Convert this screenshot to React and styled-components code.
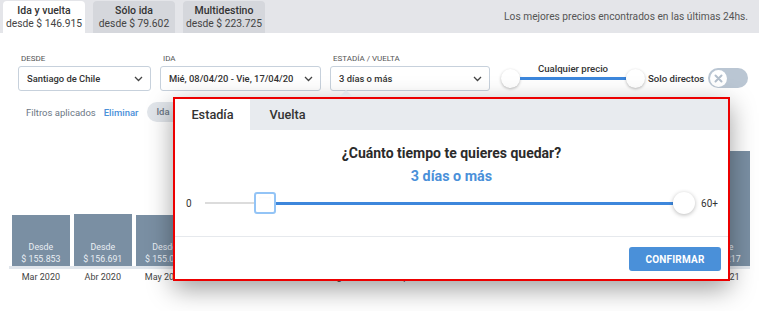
import React from "react";
import styled, { createGlobalStyle } from "styled-components";

const Global = createGlobalStyle`
  body {
    margin: 0;
    background: #fff;
    font-family: Roboto, "Liberation Sans", sans-serif;
    color: #333;
  }
`;

const Page = styled.div`
  position: relative;
  width: 759px;
  height: 311px;
  overflow: hidden;
  background: #fff;
  white-space: nowrap;
`;

const TopBar = styled.div`
  display: flex;
  align-items: flex-end;
  height: 33px;
  padding-left: 3px;
  background: #e4e5e9;
  gap: 8px;
`;

const TripTab = styled.div`
  width: 82px;
  height: 32px;
  display: flex;
  flex-direction: column;
  align-items: center;
  justify-content: center;
  border-radius: 4px 4px 0 0;
  background: ${(p) => (p.$active ? "#fff" : "#d5d7dc")};
  b {
    font-size: 10.5px;
    font-weight: 500;
    line-height: 13px;
    color: #333;
  }
  span {
    font-size: 10.3px;
    line-height: 13px;
    color: #444;
  }
`;

const TopNote = styled.div`
  margin-left: auto;
  align-self: center;
  padding-right: 11px;
  font-size: 10.2px;
  color: #555;
`;

const FilterRow = styled.div`
  display: flex;
  align-items: flex-end;
  gap: 9px;
  margin-top: 20px;
  padding-left: 18px;
`;

const Field = styled.div`
  display: flex;
  flex-direction: column;
  gap: 1px;
`;

const FieldLabel = styled.div`
  font-size: 8px;
  line-height: 12px;
  color: #555;
  text-transform: uppercase;
  padding-left: 3px;
`;

const Select = styled.div`
  width: ${(p) => p.$w}px;
  height: 25px;
  box-sizing: border-box;
  display: flex;
  align-items: center;
  justify-content: space-between;
  padding: 0 7px 0 8px;
  border: 1px solid #c7d1dc;
  border-radius: 3px;
  background: #fff;
  font-size: 9.4px;
  font-weight: 500;
  color: #333;
`;

const PriceGroup = styled.div`
  display: flex;
  flex-direction: column;
  align-items: center;
  margin: 0 0 2px 2px;
`;

const PriceLabel = styled.div`
  font-size: 9.6px;
  font-weight: 500;
  line-height: 13px;
  margin-bottom: -8px;
  color: #333;
`;

const PriceTrack = styled.div`
  display: flex;
  align-items: center;
  height: 22px;
`;

const Knob = styled.div`
  width: 19px;
  height: 19px;
  border-radius: 50%;
  background: #fff;
  box-shadow: 0 1px 3px rgba(0, 0, 0, 0.28);
`;

const BlueLine = styled.div`
  width: ${(p) => (p.$w ? `${p.$w}px` : "auto")};
  flex: ${(p) => (p.$w ? "none" : 1)};
  height: 3px;
  background: #3d87dc;
`;

const Direct = styled.div`
  display: flex;
  align-items: center;
  gap: 4px;
  margin: 0 0 3px -6px;
  font-size: 9.6px;
  font-weight: 500;
  color: #333;
`;

const Toggle = styled.div`
  width: 40px;
  height: 20px;
  border-radius: 10px;
  background: #bac6d3;
  display: flex;
  align-items: center;
  padding-left: 2px;
  box-sizing: border-box;
`;

const ToggleKnob = styled.div`
  width: 17px;
  height: 17px;
  border-radius: 50%;
  background: #fff;
  display: flex;
  align-items: center;
  justify-content: center;
`;

const AppliedRow = styled.div`
  display: flex;
  align-items: center;
  gap: 8px;
  margin-top: 11px;
  padding-left: 26px;
  height: 20px;
  font-size: 9.5px;
  color: #6b7785;
`;

const Link = styled.span`
  color: #4a90d9;
  font-weight: 500;
  margin-right: 1px;
`;

const Chip = styled.span`
  height: 20px;
  line-height: 20px;
  padding: 0 16px 0 9px;
  border-radius: 10px;
  background: #e1e5ea;
  font-weight: 500;
`;

const Bars = styled.div`
  display: flex;
  align-items: flex-end;
  gap: 4px;
  height: 144px;
  width: 738px;
  margin-left: 9px;
  padding-left: 3px;
  border-bottom: 3px solid #e1e6ec;
`;

const Bar = styled.div`
  flex: 1;
  height: ${(p) => p.$h}px;
  background: #7a8fa3;
  display: flex;
  flex-direction: column;
  justify-content: flex-end;
  align-items: center;
  padding-bottom: 1px;
  font-size: 8.8px;
  line-height: 12px;
  color: #e9eef3;
`;

const Months = styled.div`
  display: flex;
  gap: 4px;
  width: 738px;
  margin: 1px 0 0 12px;
`;

const Month = styled.div`
  flex: 1;
  text-align: center;
  font-size: 9px;
  line-height: 14px;
  color: #444;
`;

const Popup = styled.div`
  position: absolute;
  left: 173px;
  top: 97px;
  width: 557px;
  height: 184px;
  box-sizing: border-box;
  border: 2px solid #ec0000;
  background: #fff;
  box-shadow: 0 8px 24px rgba(0, 0, 0, 0.38);
  display: flex;
  flex-direction: column;
`;

const Arrow = styled.div`
  position: absolute;
  left: 165px;
  top: -9px;
  width: 0;
  height: 0;
  border-left: 6px solid transparent;
  border-right: 6px solid transparent;
  border-bottom: 6px solid #e2e6eb;
`;

const PopTabs = styled.div`
  display: flex;
  height: 31px;
  background: #e8ebef;
`;

const PopTab = styled.div`
  width: 75px;
  display: flex;
  align-items: center;
  justify-content: center;
  font-size: 12.7px;
  font-weight: 500;
  color: #333;
  background: ${(p) => (p.$active ? "#fff" : "transparent")};
`;

const Question = styled.div`
  margin-top: 13px;
  text-align: center;
  font-size: 14px;
  font-weight: 700;
  line-height: 20px;
  color: #2b2b2b;
`;

const Answer = styled.div`
  margin-top: 3px;
  text-align: center;
  font-size: 14.3px;
  font-weight: 700;
  line-height: 20px;
  color: #4a90d9;
`;

const StayRow = styled.div`
  display: flex;
  align-items: center;
  height: 22px;
  margin-top: 6px;
  padding: 0 10px 0 11px;
  font-size: 10px;
  color: #333;
`;

const GrayLine = styled.div`
  width: 49px;
  height: 2px;
  margin-left: 13px;
  background: #dcdcdc;
`;

const SquareKnob = styled.div`
  width: 22px;
  height: 22px;
  box-sizing: border-box;
  border: 2px solid #93c4f6;
  border-radius: 3px;
  background: #fff;
  box-shadow: inset 0 0 0 3px #fff, inset 0 1px 4px rgba(0, 0, 0, 0.12);
`;

const RoundKnob = styled.div`
  width: 22px;
  height: 22px;
  border-radius: 50%;
  background: #fff;
  box-shadow: 0 1px 4px rgba(0, 0, 0, 0.28);
  margin-right: 6px;
`;

const Footer = styled.div`
  margin-top: auto;
  border-top: 1px solid #e6e9ed;
  display: flex;
  justify-content: flex-end;
  padding: 10px 7px 8px 0;
`;

const Confirm = styled.button`
  width: 92px;
  height: 24px;
  border: none;
  border-radius: 3px;
  background: #4a90d9;
  color: #fff;
  font-family: Roboto, "Liberation Sans", sans-serif;
  font-size: 10px;
  font-weight: 700;
  letter-spacing: 0.2px;
`;

const Chevron = () => (
  <svg width="9" height="6" viewBox="0 0 9 6">
    <path d="M1 1l3.5 3.5L8 1" fill="none" stroke="#444" strokeWidth="1.3" />
  </svg>
);

const months = [
  ["Mar 2020", 50, "$ 155.853"],
  ["Abr 2020", 51, "$ 156.691"],
  ["May 2020", 50, "$ 155.012"],
  ["Jun 2020", 62, "$ 158.420"],
  ["Jul 2020", 70, "$ 161.305"],
  ["Ago 2020", 58, "$ 157.240"],
  ["Sep 2020", 66, "$ 159.880"],
  ["Oct 2020", 74, "$ 162.115"],
  ["Nov 2020", 80, "$ 164.530"],
  ["Dic 2020", 92, "$ 168.990"],
  ["Ene 2021", 104, "$ 172.460"],
  ["Feb 2021", 114, "$ 176.217"],
];

export default function App() {
  return (
    <Page>
      <Global />
      <TopBar>
        <TripTab $active>
          <b>Ida y vuelta</b>
          <span>desde $ 146.915</span>
        </TripTab>
        <TripTab>
          <b>Sólo ida</b>
          <span>desde $ 79.602</span>
        </TripTab>
        <TripTab>
          <b>Multidestino</b>
          <span>desde $ 223.725</span>
        </TripTab>
        <TopNote>Los mejores precios encontrados en las últimas 24hs.</TopNote>
      </TopBar>

      <FilterRow>
        <Field>
          <FieldLabel>Desde</FieldLabel>
          <Select $w={133}>
            Santiago de Chile
            <Chevron />
          </Select>
        </Field>
        <Field>
          <FieldLabel>Ida</FieldLabel>
          <Select $w={161}>
            Mié, 08/04/20 - Vie, 17/04/20
            <Chevron />
          </Select>
        </Field>
        <Field>
          <FieldLabel>Estadía / Vuelta</FieldLabel>
          <Select $w={160}>
            3 días o más
            <Chevron />
          </Select>
        </Field>
        <PriceGroup>
          <PriceLabel>Cualquier precio</PriceLabel>
          <PriceTrack>
            <Knob />
            <BlueLine $w={106} />
            <Knob />
          </PriceTrack>
        </PriceGroup>
        <Direct>
          Solo directos
          <Toggle>
            <ToggleKnob>
              <svg width="9" height="9" viewBox="0 0 9 9">
                <path d="M1.5 1.5l6 6M7.5 1.5l-6 6" stroke="#b3bfcc" strokeWidth="2" strokeLinecap="round" />
              </svg>
            </ToggleKnob>
          </Toggle>
        </Direct>
      </FilterRow>

      <AppliedRow>
        Filtros aplicados
        <Link>Eliminar</Link>
        <Chip>Ida</Chip>
      </AppliedRow>

      <Bars>
        {months.map(([m, h, p]) => (
          <Bar key={m} $h={h}>
            <div>Desde</div>
            <div>{p}</div>
          </Bar>
        ))}
      </Bars>
      <Months>
        {months.map(([m]) => (
          <Month key={m}>{m}</Month>
        ))}
      </Months>

      <Popup>
        <Arrow />
        <PopTabs>
          <PopTab $active>Estadía</PopTab>
          <PopTab>Vuelta</PopTab>
        </PopTabs>
        <Question>¿Cuánto tiempo te quieres quedar?</Question>
        <Answer>3 días o más</Answer>
        <StayRow>
          0
          <GrayLine />
          <SquareKnob />
          <BlueLine />
          <RoundKnob />
          60+
        </StayRow>
        <Footer>
          <Confirm>CONFIRMAR</Confirm>
        </Footer>
      </Popup>
    </Page>
  );
}
